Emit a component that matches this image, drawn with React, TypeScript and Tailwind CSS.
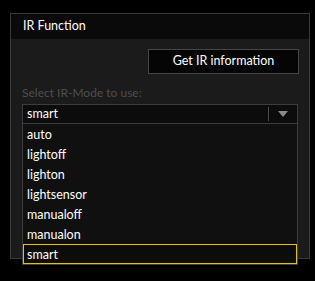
import React from "react";

const items = ["auto", "lightoff", "lighton", "lightsensor", "manualoff", "manualon", "smart"];

export default function App() {
  return (
    <div
      className="w-[315px] h-[281px] bg-black pt-[13px] pl-[10px] text-[12px] text-white"
      style={{ fontFamily: 'Lato, "Open Sans", sans-serif' }}
    >
      <div className="relative w-[300px] h-[246px] border border-[#3a3a3a] bg-[#1b1b1b] flex flex-col">
        <div className="h-[25px] bg-[#0a0a0a] pl-[12px] flex items-center text-[12.5px]">IR Function</div>
        <div className="flex justify-end pr-[10px] mt-[10px]">
          <button className="w-[151px] h-[25px] border border-[#464646] bg-[#050505] text-white text-[12.5px] flex items-center justify-center">
            Get IR information
          </button>
        </div>
        <div className="pl-[11px] mt-[11px] text-[#4e4e4e] leading-[16px]">Select IR-Mode to use:</div>
        <div className="ml-[11px] mt-[3px] w-[276px] h-[20px] border border-[#3c3c3c] bg-[#0c0c0c] flex items-center text-[12.5px]">
          <span className="pl-[4px] flex-1">smart</span>
          <div className="w-px h-[14px] bg-[#4a4a4a]" />
          <div className="w-[28px] flex justify-center">
            <svg width="10" height="6" viewBox="0 0 10 6">
              <polygon points="0,0 10,0 5,6" fill="#8a8a8a" />
            </svg>
          </div>
        </div>
        <div className="absolute left-[11px] top-[109px] w-[276px] border border-[#3c3c3c] bg-[#101010] flex flex-col text-[12.5px]">
          {items.map((it) =>
            it === "smart" ? (
              <div key={it} className="h-[20px] border border-[#e6c300] bg-[#0c0c0c] pl-[3px] pt-[2px] flex items-center">
                {it}
              </div>
            ) : (
              <div key={it} className="h-[20px] pl-[4px] pt-[3px] flex items-center">
                {it}
              </div>
            )
          )}
        </div>
      </div>
    </div>
  );
}
